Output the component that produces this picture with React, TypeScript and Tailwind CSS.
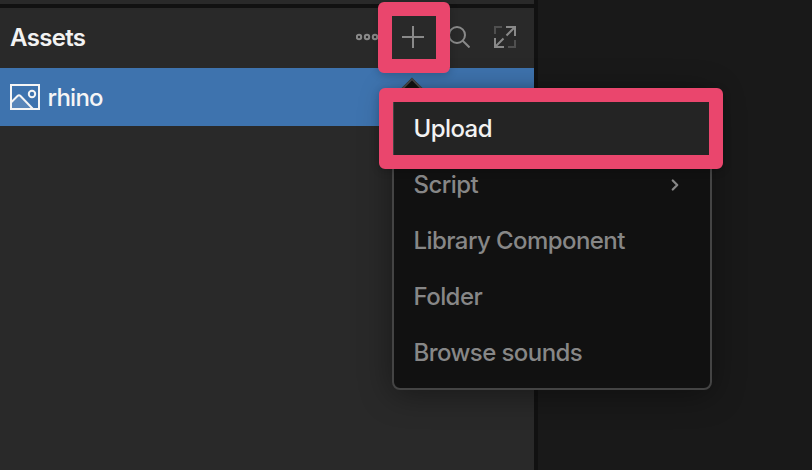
import { ChevronRight } from 'lucide-react';
import clsx from 'clsx';

interface MenuItem {
    label: string;
    active?: boolean;
    hasSubmenu?: boolean;
}

const menuItems: MenuItem[] = [
    { label: 'Upload', active: true },
    { label: 'Script', hasSubmenu: true },
    { label: 'Library Component' },
    { label: 'Folder' },
    { label: 'Browse sounds' },
];

function MoreIcon() {
    return (
        <svg width="24" height="8" viewBox="0 0 24 8" fill="none" stroke="currentColor" strokeWidth="2">
            <circle cx="3" cy="4" r="2.2" />
            <circle cx="11" cy="4" r="2.2" />
            <circle cx="19" cy="4" r="2.2" />
        </svg>
    );
}

function PlusIcon() {
    return (
        <svg width="22" height="22" viewBox="0 0 22 22" fill="none" stroke="currentColor" strokeWidth="2">
            <path d="M11 0v22M0 11h22" />
        </svg>
    );
}

function SearchIcon() {
    return (
        <svg width="22" height="22" viewBox="0 0 22 22" fill="none" stroke="currentColor" strokeWidth="2">
            <circle cx="9" cy="9" r="8" />
            <path d="M14.5 14.5l7 7" />
        </svg>
    );
}

function ExpandIcon() {
    return (
        <svg width="22" height="22" viewBox="0 0 22 22" fill="none" stroke="currentColor" strokeWidth="2">
            <path d="M1 8V1h7M21 14v7h-7" opacity="0.4" />
            <path d="M12 1h9v9M21 1l-8.5 8.5M10 21H1v-9M1 21l8.5-8.5" />
        </svg>
    );
}

function ImageIcon() {
    return (
        <svg width="30" height="26" viewBox="0 0 30 26" fill="none" stroke="currentColor" strokeWidth="2">
            <path d="M1 18.5l6.5-6.5q1.5-1.5 3 0L23 25H1z" fill="currentColor" fillOpacity="0.15" stroke="none" />
            <path d="M1 18.5l6.5-6.5q1.5-1.5 3 0L23 25" />
            <circle cx="22" cy="10" r="3.2" />
            <rect x="1" y="1" width="28" height="24" />
        </svg>
    );
}

function AddMenu() {
    return (
        <div className="absolute top-[90px] left-[392px] h-[300px] w-[320px] rounded-lg border-2 border-[#444444] bg-[#111111] py-2 shadow-[0_4px_32px_rgba(0,0,0,0.4)]">
            <div className="absolute -top-[11px] left-[10px] size-4 rotate-45 border-t-2 border-l-2 border-[#444444] bg-[#111111]" />
            {menuItems.map((item) => (
                <div
                    key={item.label}
                    className={clsx(
                        'flex h-14 items-center justify-between pt-0.5 pr-[26px] pl-[19.5px]',
                        item.active ? 'bg-[#242424] text-[#f2f2f2]' : 'text-[#878787]',
                    )}
                >
                    <span>{item.label}</span>
                    {item.hasSubmenu && <ChevronRight size={18} strokeWidth={3} />}
                </div>
            ))}
        </div>
    );
}

export default function App() {
    return (
        <main className="relative flex h-[470px] w-[812px] overflow-hidden bg-[#191919] font-[Inter,sans-serif] text-2xl leading-none font-[450] tracking-[-0.57px]">
            <section className="w-[538px] border-r-4 border-[#111111] bg-[#292929]">
                <div className="h-2 border-b-4 border-[#111111]" />

                <header className="flex h-[60px] items-center pb-0.5 pl-[10px] text-[#898989]">
                    <h1 className="w-[346px] pt-0.5 font-semibold tracking-[-0.65px] text-[#f2f2f2]">Assets</h1>
                    <MoreIcon />
                    <div className="ml-[22px] flex gap-6">
                        <PlusIcon />
                        <SearchIcon />
                        <ExpandIcon />
                    </div>
                </header>

                <div className="flex h-[58px] items-center gap-[7.5px] bg-[#3e73ae] pl-[10px] text-[#f5f5f5]">
                    <ImageIcon />
                    <span className="pt-0.5 tracking-[-0.75px]">rhino</span>
                </div>
            </section>

            <AddMenu />

            {/* Callouts around the add button and the upload entry */}
            <div className="absolute top-[2px] left-[378px] h-[71px] w-[72px] rounded-md border-14 border-[#ea466d] shadow-[0_2px_8px_rgba(0,0,0,0.2)]" />
            <div className="absolute top-[88px] left-[379px] h-[81px] w-[344px] rounded-md border-14 border-[#ea466d] shadow-[0_2px_8px_rgba(0,0,0,0.2)]" />
        </main>
    );
}
